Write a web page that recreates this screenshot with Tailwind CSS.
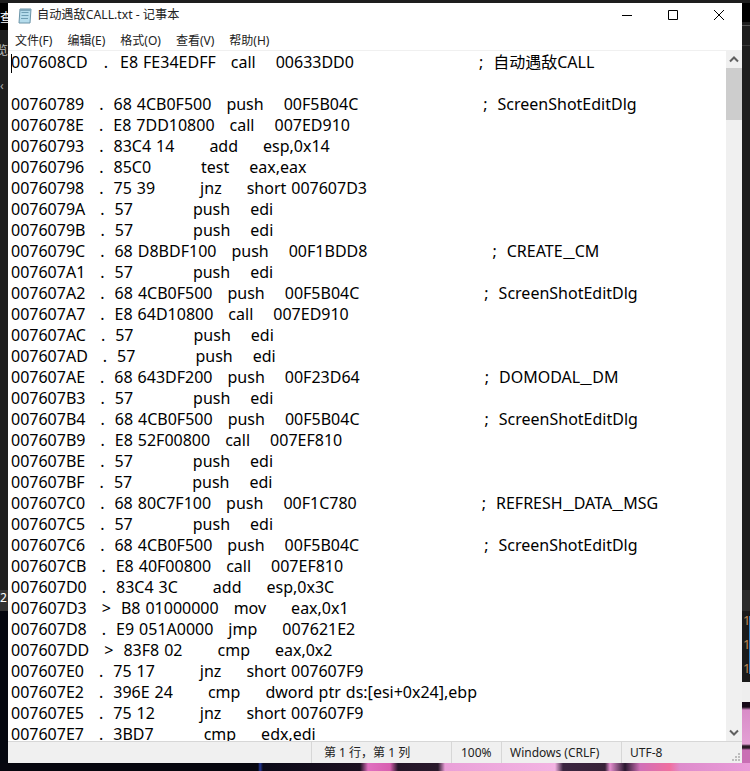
<!DOCTYPE html>
<html lang="zh-CN">

<head>
    <meta charset="UTF-8">
    <title>自动遇敌CALL.txt - 记事本</title>
    <script src="https://cdn.jsdelivr.net/npm/@tailwindcss/browser@4"></script>
</head>

<body class="relative w-[750px] h-[771px] overflow-hidden bg-[#1e1e1e] font-['Noto_Sans','Noto_Sans_CJK_SC',sans-serif]">
    <!-- desktop behind the window -->
    <div class="absolute left-0 top-[3px] w-2 h-[27px] bg-black"></div>
    <div class="absolute left-0 top-[10px] text-xs text-white">查</div>
    <div class="absolute left-[-4px] top-[43px] text-xs text-[#bbb]">览</div>
    <div class="absolute left-0 top-[78px] text-xs text-[#aaa]">‹</div>
    <div class="absolute left-0 top-[590px] w-2 h-[21px] bg-[#333] text-xs text-white">2</div>
    <div class="absolute left-0 top-[611px] w-2 h-40 bg-[#05070f]"></div>
    <div class="absolute left-[742px] top-[3px] w-2 h-[19px] bg-black"></div>
    <div class="absolute left-[742px] top-[25px] w-2 h-px bg-[#555]"></div>
    <div class="absolute left-[742px] top-[45px] w-2 h-px bg-[#3a3a3a]"></div>
    <div class="absolute left-[742px] top-[590px] w-2 h-[21px] bg-[#2c2c2c]"></div>
    <div class="absolute left-[742px] top-[611px] w-2 h-[71px] bg-[#1a1a1a]"></div>
    <div class="absolute left-[743px] top-[608px] text-[13px] leading-[24px] text-[#c08a55]">1<br>1<br>1</div>
    <div class="absolute left-[749px] top-[616px] w-px h-[58px] bg-[#2f7fc4]"></div>
    <div class="absolute left-[742px] top-[682px] w-2 h-[20px] bg-[#eee]"></div>
    <div class="absolute left-[742px] top-[702px] w-2 h-[69px] bg-[linear-gradient(180deg,#160a18_0,#160a18_5px,#d98cc8_8px,#e3a0d4_42px,#2a1a26_44px,#2a1a26_46px,#c96fb4_48px)]"></div>
    <div class="absolute left-0 top-[763px] w-[750px] h-2 bg-[linear-gradient(90deg,#07070f_0,#07070f_258px,#24389a_260px,#0b0a18_263px,#1c1020_360px,#e070c0_368px,#d860b0_390px,#241628_398px,#2a1a2c_438px,#eaa0d8_445px,#f3b3e2_555px,#3a2540_563px,#382238_605px,#e58fd0_610px,#2a1830_625px,#d070b8_640px,#f070a0_670px,#de8ccc_680px,#ea9cd8_750px)]"></div>

    <!-- notepad window -->
    <div class="absolute left-2 top-[3px] w-[734px] h-[760px] bg-white flex flex-col">
        <div class="h-[25px] flex items-center pl-[9px] text-xs text-[#222]">
            <svg width="16" height="17" viewBox="0 0 16 17" class="mr-[4px]">
                <path d="M3 2h11l-1 14H2z" fill="#b5dcec" stroke="#6b94a8" />
                <path d="M4.500 5.500h7M4.500 8.500h7M4 11.500h7" stroke="#6f9fb5" />
                <path d="M3 2h11v2H3z" fill="#7fa9bd" />
            </svg>
            <span class="text-[12.200px]">自动遇敌CALL.txt - 记事本</span>
            <div class="ml-auto flex items-center">
                <svg width="46" height="25" viewBox="0 0 46 25"><path d="M18 12.500h10" stroke="#000" /></svg>
                <svg width="46" height="25" viewBox="0 0 46 25"><path d="M18.500 7.500h9v9h-9z" fill="none" stroke="#000" /></svg>
                <svg width="46" height="25" viewBox="0 0 46 25"><path d="M18 7l10 10M28 7L18 17" fill="none" stroke="#000" /></svg>
            </div>
        </div>
        <div class="h-[22px] flex items-center pl-[7px] pt-[3px] gap-[15px] text-xs text-[#222]">
            <span>文件(F)</span><span>编辑(E)</span><span>格式(O)</span><span>查看(V)</span><span>帮助(H)</span>
        </div>
        <div class="h-[1px] bg-[#f0f0f0]"></div>
        <div class="flex-1 flex min-h-0">
            <div class="relative flex-1 min-w-0">
                <div class="absolute left-[3px] top-[3px] w-px h-[19px] bg-black"></div>
                <pre class="h-full overflow-hidden pl-[3px] pt-[1px] font-['Noto_Sans','Noto_Sans_CJK_SC',sans-serif] text-[16px] leading-[21px] [word-spacing:0.84px] text-black">007608CD   <span class="pl-[1px]">.</span>  <span class="pl-[2px]">E8 FE34EDFF</span>   call    00633DD0                         ;  自动遇敌CALL

00760789   .  68 4CB0F500   push    00F5B04C                         ;  ScreenShotEditDlg
0076078E   .  E8 7DD10800   call    007ED910
00760793   .  83C4 14       add     esp,0x14
00760796   .  85C0          test    eax,eax
00760798   .  75 39         jnz     short 007607D3
0076079A   .  57            push    edi
0076079B   .  57            push    edi
0076079C   .  68 D8BDF100   push    00F1BDD8                         ;  CREATE<span class="inline-block px-[2.500px] scale-x-[1.6]">_</span>CM
007607A1   .  57            push    edi
007607A2   .  68 4CB0F500   push    00F5B04C                         ;  ScreenShotEditDlg
007607A7   .  E8 64D10800   call    007ED910
007607AC   .  57            push    edi
007607AD   .  57            push    edi
007607AE   .  68 643DF200   push    00F23D64                         ;  DOMODAL<span class="inline-block px-[2.500px] scale-x-[1.6]">_</span>DM
007607B3   .  57            push    edi
007607B4   .  68 4CB0F500   push    00F5B04C                         ;  ScreenShotEditDlg
007607B9   .  E8 52F00800   call    007EF810
007607BE   .  57            push    edi
007607BF   .  57            push    edi
007607C0   .  68 80C7F100   push    00F1C780                         ;  REFRESH<span class="inline-block px-[2px] scale-x-[1.5]">_</span>DATA<span class="inline-block px-[2px] scale-x-[1.5]">_</span>MSG
007607C5   .  57            push    edi
007607C6   .  68 4CB0F500   push    00F5B04C                         ;  ScreenShotEditDlg
007607CB   .  E8 40F00800   call    007EF810
007607D0   .  83C4 3C       add     esp,0x3C
007607D3   &gt;  B8 01000000   mov     eax,0x1
007607D8   .  E9 051A0000   jmp     007621E2
007607DD   &gt;  83F8 02       cmp     eax,0x2
007607E0   .  75 17         jnz     short 007607F9
007607E2   .  396E 24       cmp     dword ptr ds:[esi+0x24],ebp
007607E5   .  75 12         jnz     short 007607F9
007607E7   .  3BD7          cmp     edx,edi</pre>
            </div>
            <div class="w-[16px] bg-[#f0f0f0] flex flex-col justify-between">
                <div>
                    <svg width="16" height="17" viewBox="0 0 16 17"><path d="M4 10.500l4-4 4 4" fill="none" stroke="#606060" stroke-width="2" /></svg>
                    <div class="h-[52px] bg-[#cdcdcd]"></div>
                </div>
                <svg width="16" height="17" viewBox="0 0 16 17"><path d="M4 6.500l4 4 4-4" fill="none" stroke="#606060" stroke-width="2" /></svg>
            </div>
        </div>
        <!-- status bar -->
        <div class="relative h-[22px] bg-[#f0f0f0] border-t border-[#d7d7d7] flex text-xs leading-[21px] text-[#222]">
            <div class="w-[303px]"></div>
            <div class="w-[140px] border-l border-[#d7d7d7] pl-3">第 1 行，第 1 列</div>
            <div class="w-[50px] border-l border-[#d7d7d7] pl-[9px]">100%</div>
            <div class="w-[120px] border-l border-[#d7d7d7] pl-2">Windows (CRLF)</div>
            <div class="border-l border-[#d7d7d7] pl-[8px]">UTF-8</div>
            <svg width="10" height="10" viewBox="0 0 10 10" class="absolute right-0 bottom-0" fill="#bdbdbd">
                <path d="M6 0h2v2H6zM3 3h2v2H3zM6 3h2v2H6zM0 6h2v2H0zM3 6h2v2H3zM6 6h2v2H6z" />
            </svg>
        </div>
    </div>
</body>

</html>
